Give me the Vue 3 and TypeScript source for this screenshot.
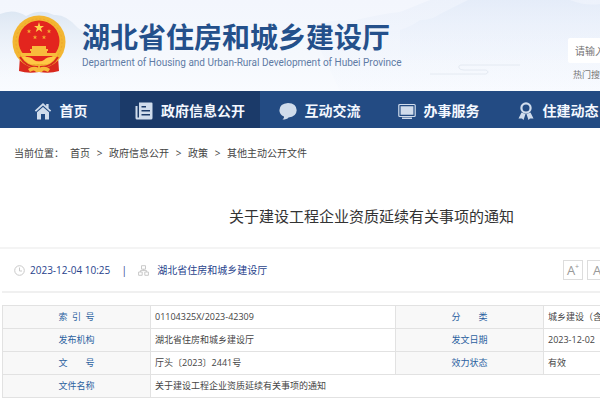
<script setup lang="ts">
interface NavItem { label: string; icon: string; active?: boolean }

const nav: NavItem[] = [
  { label: '首页', icon: 'home' },
  { label: '政府信息公开', icon: 'news', active: true },
  { label: '互动交流', icon: 'chat' },
  { label: '办事服务', icon: 'screen' },
  { label: '住建动态', icon: 'medal' },
]

const crumbs: string[] = ['首页', '政府信息公开', '政策', '其他主动公开文件']

const rows: string[][] = [
  ['索 引 号', '01104325X/2023-42309', '分 类', '城乡建设（含'],
  ['发布机构', '湖北省住房和城乡建设厅', '发文日期', '2023-12-02'],
  ['文 号', '厅头〔2023〕2441号', '效力状态', '有效'],
]
</script>

<template>
  <div class="viewport">
    <div class="page">
      <header class="header">
        <svg class="scenery" viewBox="0 0 743 91" preserveAspectRatio="none" aria-hidden="true">
          <defs>
            <linearGradient id="hill" x1="0" y1="0" x2="0" y2="1">
              <stop offset="0" stop-color="#dde7f3" />
              <stop offset="1" stop-color="#f0f5fc" stop-opacity="0" />
            </linearGradient>
            <linearGradient id="far" x1="0" y1="0" x2="0" y2="1">
              <stop offset="0" stop-color="#e3ebf8" />
              <stop offset="1" stop-color="#eff4fd" stop-opacity="0.3" />
            </linearGradient>
          </defs>
          <path d="M0 14Q14 8 26 16Q40 8 54 15Q66 14 78 28Q92 38 120 42V80H0Z" fill="url(#hill)" />
          <path d="M310 28Q330 18 352 21Q380 14 400 12L430 0H743V91H340Z" fill="url(#far)" opacity=".4" />
          <path d="M400 30Q412 26 420 20Q432 20 440 14Q456 6 468 0H570Q585 6 600 4V60H400Z" fill="url(#far)" opacity=".8" />
          <path d="M520 65H462Q458 65 459 68Q460 70 464 70H486Q490 72 486 74H430" fill="none" stroke="#e4eaf2" />
        </svg>
        <div class="brand">
          <svg class="emblem" viewBox="0 0 54 58" role="img" aria-label="国徽">
            <path d="M8 41L7 56Q16 59 27 57Q38 59 47 56L46 41Z" fill="#d9281e" />
            <circle cx="27" cy="27" r="26.5" fill="#f3b632" />
            <circle cx="27" cy="27" r="23" fill="none" stroke="#eda62b" stroke-width="1" stroke-dasharray="2 2" />
            <circle cx="27" cy="26" r="20.5" fill="#e3251e" />
            <path d="M27 7L28.2 10.9H32L29 13.2L30.2 17L27 14.7L23.8 17L25 13.2L22 10.9H25.8Z" fill="#ffd34a" />
            <g fill="#f5a832">
              <path d="M17 14l.6 1.6h1.7l-1.4 1 .6 1.7-1.5-1-1.5 1 .6-1.7-1.4-1h1.7z" />
              <path d="M37 14l.6 1.6h1.7l-1.4 1 .6 1.7-1.5-1-1.5 1 .6-1.7-1.4-1h1.7z" />
              <path d="M23 20l.6 1.6h1.7l-1.4 1 .6 1.7-1.5-1-1.5 1 .6-1.7-1.4-1h1.7z" />
              <path d="M32 20l.6 1.6h1.7l-1.4 1 .6 1.7-1.5-1-1.5 1 .6-1.7-1.4-1h1.7z" />
            </g>
            <path d="M20 31H34V34H36V36H18V34H20Z M19 36H35V38H19Z M9 38H45V41H9Z" fill="#f8bc3c" />
            <path d="M10 42Q18 41 22 45Q27 48 32 45Q36 41 44 42Q38 51 29 49H25Q16 51 10 42Z" fill="#ffc846" />
            <path d="M8 42Q14 52 25 52L24 56H30L29 52Q40 52 46 42" fill="none" stroke="#d9281e" stroke-width="2" />
            <path d="M16 54Q21 50 27 53Q33 50 38 54L36 57Q31 54 30 57H24Q22 54 18 57Z" fill="#f7b93a" />
          </svg>
          <div class="names">
            <div class="name">湖北省住房和城乡建设厅</div>
            <div class="name-en">Department of Housing and Urban-Rural Development of Hubei Province</div>
          </div>
        </div>
        <form class="search" @submit.prevent>
          <input class="search-box" type="text" placeholder="请输入" aria-label="请输入" />
          <div class="hot">热门搜</div>
        </form>
      </header>

      <nav class="nav">
        <a v-for="item in nav" :key="item.label" href="#" class="nav-item" :class="{ active: item.active }">
          <svg class="nav-icon" viewBox="0 0 18 18" aria-hidden="true">
            <template v-if="item.icon === 'home'">
              <path d="M9 1L0.8 8.6L2 9.8L9 3.5L16 9.8L17.2 8.6L14.6 6.2V2H12.2V4Z" />
              <path d="M9 5L3 10.3V17.5H7V12H11V17.5H15V10.3Z" />
            </template>
            <template v-else-if="item.icon === 'news'">
              <path fill-rule="evenodd" d="M4 .5H16.5Q17.5 .5 17.5 1.5V16Q17.5 17.5 16 17.5H2Q.5 17.5 .5 16V4H2.5V15.5H4Z M6.5 4V5.6H11V4Z M6.5 8V9.6H15V8Z M6.5 12V13.6H15V12Z" />
            </template>
            <path v-else-if="item.icon === 'chat'" d="M9 1Q17.5 1.4 17.7 8.3Q17.4 14.8 9.5 15.5Q8 17.5 3.5 17.5Q5.5 16 5 14.6Q.4 12.7 .4 8.2Q.7 1.5 9 1Z" />
            <template v-else-if="item.icon === 'screen'">
              <rect x=".8" y="2.5" width="16.4" height="12" rx="1" fill="none" stroke="#d0dcec" stroke-width="1.2" />
              <path d="M2.6 4.3H15.4V12.7H2.6Z M4 15.4H14V17H4Z" />
            </template>
            <template v-else>
              <circle cx="9" cy="6" r="4.6" fill="none" stroke="#d0dcec" stroke-width="2.2" />
              <path d="M4.5 10.5L1.5 16.5H5L6.5 18L8.5 12Z M13.5 10.5L16.5 16.5H13L11.5 18L9.5 12Z" />
            </template>
          </svg>
          <span>{{ item.label }}</span>
        </a>
      </nav>

      <div class="crumbs">
        <span class="crumb-title">当前位置：</span>
        <template v-for="(crumb, i) in crumbs" :key="crumb">
          <span v-if="i > 0" class="arrow">&gt;</span>
          <a href="#">{{ crumb }}</a>
        </template>
      </div>

      <main class="article">
        <h1 class="title">关于建设工程企业资质延续有关事项的通知</h1>
        <div class="meta">
          <svg class="meta-icon" viewBox="0 0 11 11" aria-hidden="true">
            <circle cx="5.5" cy="5.5" r="4.8" />
            <path d="M5.5 2.5V6H8" />
          </svg>
          <span class="date">2023-12-04 10:25</span>
          <span class="bar">|</span>
          <svg class="meta-icon" viewBox="0 0 11 11" aria-hidden="true">
            <path d="M3.5 .7H7.5V4.2H3.5Z M.6 7H4.2V10.3H.6Z M6.8 7H10.4V10.3H6.8Z M5.5 4.2V5.6M2.4 7V5.6H8.6V7" />
          </svg>
          <span class="source">湖北省住房和城乡建设厅</span>
          <div class="tools">
            <button type="button" aria-label="A+">A<sup>+</sup></button>
            <button type="button">A</button>
          </div>
        </div>

        <table class="info">
          <colgroup>
            <col class="col-label" /><col class="col-value" /><col class="col-label" /><col />
          </colgroup>
          <tbody>
            <tr v-for="row in rows" :key="row[0]">
              <th scope="row"><span class="label">{{ row[0] }}</span></th>
              <td>{{ row[1] }}</td>
              <th scope="row"><span class="label">{{ row[2] }}</span></th>
              <td>{{ row[3] }}</td>
            </tr>
            <tr>
              <th scope="row"><span class="label">文件名称</span></th>
              <td colspan="3">关于建设工程企业资质延续有关事项的通知</td>
            </tr>
          </tbody>
        </table>
      </main>
    </div>
  </div>
</template>

<style>
body {
  background: #fff;
}
</style>

<style scoped>
.viewport {
  overflow: hidden;
  font-family: "Open Sans", "Noto Sans CJK SC", sans-serif;
  font-size: 10px;
  line-height: 16px;
  color: #444;
}
.page {
  min-width: 743px;
}
a {
  color: inherit;
  text-decoration: none;
}
.header {
  position: relative;
  display: flex;
  justify-content: space-between;
  height: 91px;
  background: linear-gradient(#f3f6fd, #f5f8fd 60%, #f9fbff);
}
.scenery {
  position: absolute;
  inset: 0;
  width: 100%;
  height: 100%;
}
.brand {
  position: relative;
  display: flex;
  gap: 16px;
  padding: 15px 0 0 12px;
}
.emblem {
  width: 54px;
  height: 58px;
}
.names {
  white-space: nowrap;
}
.name {
  font-family: "Noto Sans CJK SC", sans-serif;
  font-size: 28px;
  font-weight: 700;
  line-height: 42px;
  color: #24508b;
}
.name-en {
  font-family: Roboto, sans-serif;
  font-size: 10px;
  line-height: 12px;
  color: #5f7ba5;
}
.search {
  position: relative;
  width: 175px;
  padding-top: 38px;
}
.search-box {
  box-sizing: border-box;
  display: block;
  width: 160px;
  height: 25px;
  padding: 0 7px;
  border: 0;
  border-radius: 2px;
  background: #fff;
  font: inherit;
}
.search-box::placeholder {
  color: #757575;
  opacity: 1;
}
.hot {
  padding: 4px 0 0 5px;
  font-size: 9px;
  color: #777;
}
.nav {
  display: flex;
  height: 37px;
  padding-left: 1px;
  background: #234b83;
  overflow: hidden;
}
.nav-item {
  box-sizing: border-box;
  display: flex;
  flex: none;
  align-items: center;
  justify-content: center;
  gap: 8px;
  min-width: 119px;
  padding: 2px 15px 0;
  font-size: 14px;
  font-weight: 700;
  line-height: 20px;
  color: #f4f8ff;
}
.nav-item.active {
  background: #1b3a69;
}
.nav-icon {
  width: 18px;
  height: 18px;
  fill: #d0dcec;
}
.crumbs {
  display: flex;
  gap: 6px;
  padding: 17px 14px 0;
}
.arrow {
  width: 7px;
  text-align: center;
}
.article {
  padding-top: 43px;
}
.title {
  margin: 0;
  padding-bottom: 19px;
  border-bottom: 2px solid #f4f4f4;
  font-size: 15px;
  font-weight: 400;
  line-height: 24px;
  text-align: center;
  color: #333;
}
.meta {
  display: flex;
  align-items: center;
  height: 42px;
  margin: 0 2px;
  padding-left: 12px;
  border-bottom: 2px solid #f0f0f0;
  color: #28438c;
}
.meta-icon {
  width: 11px;
  height: 11px;
  fill: none;
  stroke: #c9c9c9;
}
.date {
  padding-left: 5px;
}
.bar {
  width: 28px;
  text-align: center;
}
.source {
  padding-left: 8px;
}
.tools {
  display: flex;
  gap: 4px;
  width: 178px;
  margin-left: auto;
}
.tools button {
  display: flex;
  align-items: center;
  justify-content: center;
  width: 20px;
  height: 20px;
  padding: 0;
  border: 1px solid #ddd;
  background: #fff;
  font: 13px "Open Sans", sans-serif;
  color: #999;
}
.tools sup {
  font-size: 7px;
  line-height: 12px;
  align-self: flex-start;
}
.info {
  width: calc(100% - 4px);
  margin: 12px 2px 0;
  border-collapse: collapse;
  table-layout: fixed;
  font-size: 9px;
  line-height: 14px;
}
.col-label {
  width: 148px;
}
.col-value {
  width: 245px;
}
.info th,
.info td {
  height: 22px;
  padding: 0 4px;
  border: 1px solid #e2e2e2;
  text-align: left;
  white-space: nowrap;
}
.info th {
  background: #f8f8f8;
  font-weight: 400;
  text-align: center;
  color: #2b619f;
}
.label {
  display: block;
  width: 36px;
  margin: 0 auto;
  text-align-last: justify;
}
</style>
